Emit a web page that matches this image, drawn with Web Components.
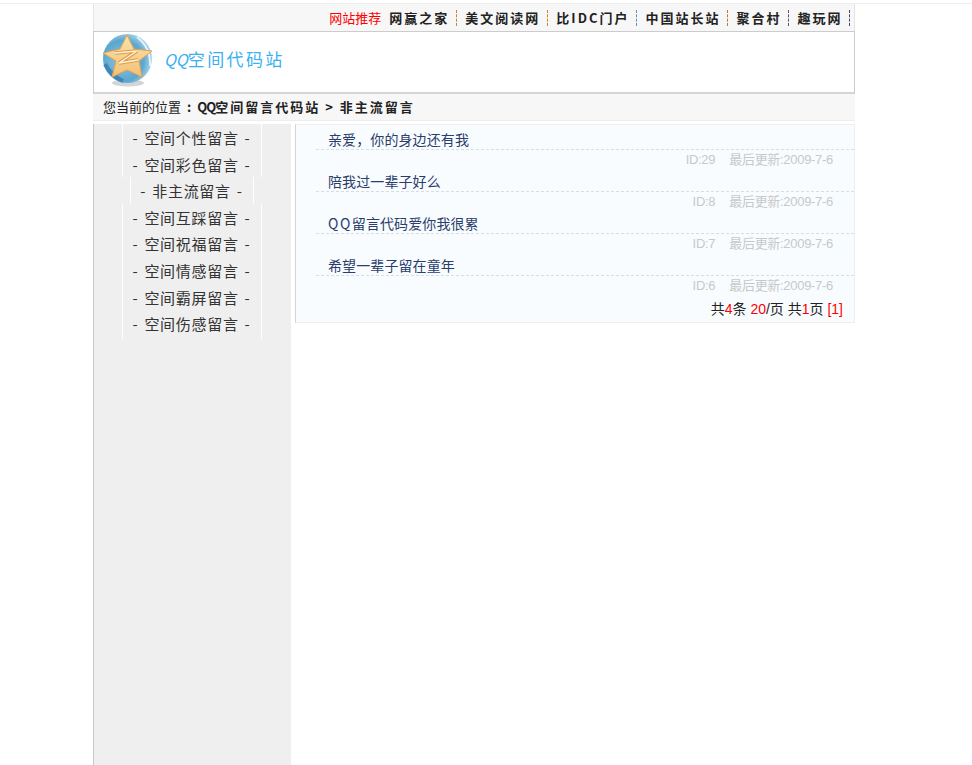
<!DOCTYPE html>
<html lang="zh">
<head>
<meta charset="utf-8">
<title>非主流留言</title>
<style>
    html, body { margin: 0; padding: 0; background: #fff; height: 100%; }
    body { font-family: "Noto Sans CJK SC", "Liberation Sans", sans-serif; overflow: hidden; }
</style>
</head>
<body>
<site-page>
    <top-bar></top-bar>
    <logo-box></logo-box>
    <bread-crumb></bread-crumb>
    <div slot="side">
        <side-item>空间个性留言</side-item>
        <side-item>空间彩色留言</side-item>
        <side-item current>非主流留言</side-item>
        <side-item>空间互踩留言</side-item>
        <side-item>空间祝福留言</side-item>
        <side-item>空间情感留言</side-item>
        <side-item>空间霸屏留言</side-item>
        <side-item>空间伤感留言</side-item>
    </div>
    <div slot="main">
        <msg-row msg-id="29">亲爱，你的身边还有我</msg-row>
        <msg-row msg-id="8">陪我过一辈子好么</msg-row>
        <msg-row msg-id="7"><span style="letter-spacing:1.5px">QQ</span>留言代码爱你我很累</msg-row>
        <msg-row msg-id="6">希望一辈子留在童年</msg-row>
        <page-info></page-info>
    </div>
</site-page>

<script>
class SitePage extends HTMLElement {
    constructor() {
        super();
        this.attachShadow({ mode: "open" });
    }
    connectedCallback() {
        this.shadowRoot.innerHTML = `
            <style>
                :host {
                    display: block;
                    height: 765px;
                    padding-top: 3px;
                    box-sizing: border-box;
                }
                .wrap {
                    display: flex;
                    flex-direction: column;
                    width: 762px;
                    height: 761px;
                    margin-left: 93px;
                }
                .line {
                    height: 1px;
                    background: #eeeeee;
                }
                .body {
                    flex: 1;
                    display: flex;
                    padding-top: 3px;
                }
                .side {
                    width: 197px;
                    background: #efefef;
                    border-left: 1px solid #c8c8c8;
                }
                .main {
                    width: 560px;
                    margin-left: 4px;
                    align-self: flex-start;
                    background: #f8fcff;
                    border-left: 1px solid #d4d4d4;
                    border-top: 1px solid #eeeeee;
                    border-right: 1px solid #eeeeee;
                    border-bottom: 1px solid #eeeeee;
                    box-sizing: border-box;
                    height: 199px;
                }
            </style>
            <div class="line"></div>
            <div class="wrap">
                <slot></slot>
                <div class="body">
                    <div class="side"><slot name="side"></slot></div>
                    <div class="main"><slot name="main"></slot></div>
                </div>
            </div>
        `;
    }
}

class TopBar extends HTMLElement {
    constructor() {
        super();
        this.attachShadow({ mode: "open" });
    }
    connectedCallback() {
        const links = [
            ["网赢之家", "#b98a3a"],
            ["美文阅读网", "#c4872c"],
            ["比IDC门户", "#5c93bd"],
            ["中国站长站", "#b97c30"],
            ["聚合村", "#6a4a70"],
            ["趣玩网", "#5a3a70"]
        ];
        this.shadowRoot.innerHTML = `
            <style>
                :host {
                    display: flex;
                    justify-content: flex-end;
                    align-items: center;
                    height: 27px;
                    padding-right: 4px;
                    background: #f7f7f7;
                    border-left: 1px solid #e4e4e4;
                    border-right: 1px solid #e4e4e4;
                    font-size: 13px;
                }
                .rec { color: #ff0000; margin-right: 8px; }
                a {
                    color: #222;
                    font-weight: 700;
                    letter-spacing: 2px;
                    padding: 0 6.5px 0 8.5px;
                    height: 16px;
                    line-height: 16px;
                    border-right: 1px dashed #7d6a45;
                    text-decoration: none;
                }
                a:first-of-type { padding-left: 0; }
            </style>
            <span class="rec">网站推荐</span>
            ${links.map(l => `<a href="#" style="border-right-color:${l[1]}">${l[0]}</a>`).join("")}
        `;
    }
}

class LogoBox extends HTMLElement {
    constructor() {
        super();
        this.attachShadow({ mode: "open" });
    }
    connectedCallback() {
        this.shadowRoot.innerHTML = `
            <style>
                :host {
                    display: flex;
                    align-items: flex-start;
                    height: 60px;
                    background: #fff;
                    border: 1px solid #cccccc;
                    border-bottom-width: 2px;
                    border-bottom-color: #d4d4d4;
                    padding-left: 7px;
                }
                svg { display: block; }
                span {
                    margin: 17px 0 0 9px;
                    color: #3ab0f0;
                    font-size: 17px;
                    line-height: 20px;
                    letter-spacing: 2.4px;
                }
                i { letter-spacing: 0; font-size: 16px; }
            </style>
            <svg width="54" height="58" viewBox="0 0 54 58">
                <defs>
                    <radialGradient id="ball" cx="40%" cy="55%" r="60%">
                        <stop offset="0" stop-color="#8cc6e2"></stop>
                        <stop offset="0.7" stop-color="#5ba6d0"></stop>
                        <stop offset="1" stop-color="#a9d6ea"></stop>
                    </radialGradient>
                    <linearGradient id="star" x1="0" y1="0" x2="0" y2="1">
                        <stop offset="0" stop-color="#fbe2ab"></stop>
                        <stop offset="1" stop-color="#f3c077"></stop>
                    </linearGradient>
                </defs>
                <ellipse cx="27" cy="51" rx="16" ry="3.5" fill="#b9b9b9" opacity="0.6"></ellipse>
                <circle cx="26.5" cy="26.5" r="24.5" fill="url(#ball)"></circle>
                <path d="M36 5 Q50 16 49 34" fill="none" stroke="#e4f3fa" stroke-width="2"></path>
                <path d="M4 32 Q10 44 22 49" fill="none" stroke="#3f86b4" stroke-width="4"></path>
                <path d="M26 3 L33 17 L51 19 L38 29 L41 45 L26 38 L11 45 L15 29 L2 21 L19 17 Z" fill="url(#star)" stroke="#e3a24a" stroke-width="1" stroke-linejoin="round"></path>
                <path d="M14 21 L36 19 L18 31 L37 28" fill="none" stroke="#dd9c48" stroke-width="3.5"></path>
                <path d="M14 21 L36 19 L18 31 L37 28" fill="none" stroke="#fff3d8" stroke-width="1.5"></path>
            </svg>
            <span><i>QQ</i>空间代码站</span>
        `;
    }
}

class BreadCrumb extends HTMLElement {
    constructor() {
        super();
        this.attachShadow({ mode: "open" });
    }
    connectedCallback() {
        this.shadowRoot.innerHTML = `
            <style>
                :host {
                    display: flex;
                    align-items: center;
                    height: 24px;
                    padding: 0 0 2px 10px;
                    background: #f7f7f7;
                    border-bottom: 1px solid #eeeeee;
                    color: #222;
                    font-size: 13px;
                }
                b { letter-spacing: 2px; }
                b i { font-style: normal; letter-spacing: -1px; }
                .colon { margin: 0 6px 0 6px; font-weight: 700; }
            </style>
            <span>您当前的位置</span><span class="colon">:</span><b><i>QQ</i>空间留言代码站 &gt; 非主流留言</b>
        `;
    }
}

class SideItem extends HTMLElement {
    constructor() {
        super();
        this.attachShadow({ mode: "open" });
    }
    connectedCallback() {
        this.shadowRoot.innerHTML = `
            <style>
                :host {
                    display: block;
                    width: fit-content;
                    margin: 0 auto;
                    position: relative;
                    left: -0.5px;
                    height: 26.6px;
                    line-height: 28px;
                    padding: 0 10px 0 9px;
                    border-left: 1px solid #fff;
                    border-right: 1px solid #fff;
                    color: #333;
                    font-size: 15px;
                    letter-spacing: 0.7px;
                    white-space: nowrap;
                }
                :host(:last-of-type) { height: 28.6px; }
                .d1 { margin-right: 6px; }
                .d2 { margin-left: 6px; }
            </style>
            <span class="d1">-</span><slot></slot><span class="d2">-</span>
        `;
    }
}

class MsgRow extends HTMLElement {
    constructor() {
        super();
        this.attachShadow({ mode: "open" });
    }
    connectedCallback() {
        const id = this.getAttribute("msg-id");
        this.shadowRoot.innerHTML = `
            <style>
                :host { display: block; height: 42px; margin-left: 20px; }
                .title {
                    line-height: 28px;
                    padding-left: 12px;
                    border-bottom: 1px dashed #d8dde0;
                    color: #2b3d6b;
                    font-size: 14px;
                    letter-spacing: 0.1px;
                    box-sizing: border-box;
                    height: 25px;
                }
                .meta {
                    display: flex;
                    justify-content: flex-end;
                    gap: 14px;
                    padding-right: 21px;
                    height: 17px;
                    line-height: 20px;
                    color: #c8c8c8;
                    font-size: 13px;
                    letter-spacing: -0.3px;
                    font-family: "Liberation Sans", "Noto Sans CJK SC", sans-serif;
                }
            </style>
            <div class="title"><slot></slot></div>
            <div class="meta"><span>ID:${id}</span><span>最后更新:2009-7-6</span></div>
        `;
    }
}

class PageInfo extends HTMLElement {
    constructor() {
        super();
        this.attachShadow({ mode: "open" });
    }
    connectedCallback() {
        this.shadowRoot.innerHTML = `
            <style>
                :host {
                    display: block;
                    text-align: right;
                    padding-right: 11px;
                    height: 26px;
                    line-height: 32px;
                    color: #222;
                    font-size: 14px;
                    font-family: "Liberation Sans", "Noto Sans CJK SC", sans-serif;
                }
                i { font-style: normal; color: #f00; }
            </style>
            共<i>4</i>条 <i>20</i>/页 共<i>1</i>页 <i>[1]</i>
        `;
    }
}

customElements.define("site-page", SitePage);
customElements.define("top-bar", TopBar);
customElements.define("logo-box", LogoBox);
customElements.define("bread-crumb", BreadCrumb);
customElements.define("side-item", SideItem);
customElements.define("msg-row", MsgRow);
customElements.define("page-info", PageInfo);
</script>
</body>
</html>
